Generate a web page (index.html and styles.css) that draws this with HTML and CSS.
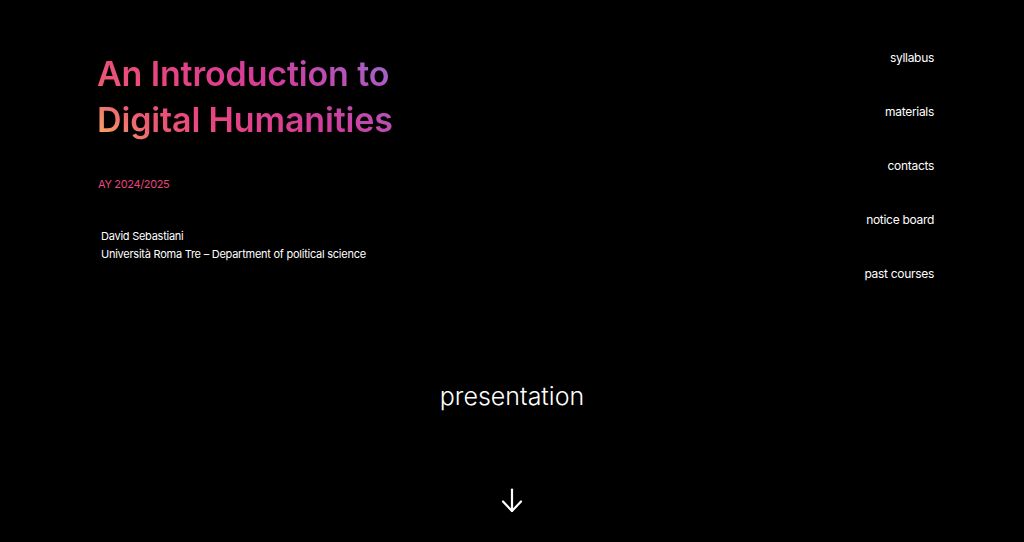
FILE: index.html
```html
<!DOCTYPE html>
<html lang="en">
<head>
<meta charset="utf-8">
<title>An Introduction to Digital Humanities</title>
<link rel="stylesheet" href="styles.css">
</head>
<body>
<div class="page">
  <header class="top">
    <div class="intro">
      <h1 class="title">An Introduction to<br>Digital Humanities</h1>
      <p class="year">AY 2024/2025</p>
      <div class="author">
        <p>David Sebastiani</p>
        <p>Università Roma Tre – Department of political science</p>
      </div>
    </div>
    <nav class="nav">
      <a href="#">syllabus</a>
      <a href="#">materials</a>
      <a href="#">contacts</a>
      <a href="#">notice board</a>
      <a href="#">past courses</a>
    </nav>
  </header>
  <section class="pres">
    <h2 class="pres-title">presentation</h2>
    <svg class="arrow" width="22" height="25" viewBox="0 0 22 25" fill="none" stroke="#fff" stroke-width="2.2" stroke-linecap="round" stroke-linejoin="round">
      <path d="M11 1.5 V23"/>
      <path d="M2 13.5 L11 23 L20 13.5"/>
    </svg>
  </section>
</div>
</body>
</html>
```
FILE: styles.css
```css
* { box-sizing: border-box; }
html, body { margin: 0; padding: 0; background: #000; }
body {
  font-family: Inter, "Noto Sans", "Liberation Sans", sans-serif;
  color: #fff;
  width: 1024px;
  height: 542px;
  overflow: hidden;
}
.page {
  display: flex;
  flex-direction: column;
  height: 100%;
}
.top {
  display: flex;
  justify-content: space-between;
  padding: 50px 90px 0 97px;
}
.intro {
  padding-top: 1px;
}
.title {
  margin: 0;
  font-size: 34px;
  font-weight: 600;
  line-height: 46px;
  letter-spacing: -0.15px;
  background: linear-gradient(40deg, #f8b660 0%, #ec5a72 18%, #e9457f 34%, #d23c9c 62%, #9a6ad2 100%);
  -webkit-background-clip: text;
  background-clip: text;
  color: transparent;
  display: inline-block;
}
.year {
  margin: 34px 0 0 1px;
  font-size: 11px;
  letter-spacing: -0.35px;
  color: #e8457f;
  line-height: 14px;
}
.author {
  margin-top: 36px;
  padding-left: 4px;
  font-size: 11px;
  letter-spacing: -0.25px;
  line-height: 18px;
}
.author p { margin: 0; }
.nav {
  display: flex;
  flex-direction: column;
  align-items: flex-end;
  gap: 38px;
}
.nav a {
  color: #fff;
  text-decoration: none;
  font-size: 12px;
  letter-spacing: -0.3px;
  line-height: 16px;
}
.pres {
  display: flex;
  flex-direction: column;
  align-items: center;
  margin-top: 98px;
}
.pres-title {
  margin: 0;
  font-size: 25px;
  font-weight: 300;
  line-height: 32px;
}
.arrow {
  margin-top: 76px;
}
```
